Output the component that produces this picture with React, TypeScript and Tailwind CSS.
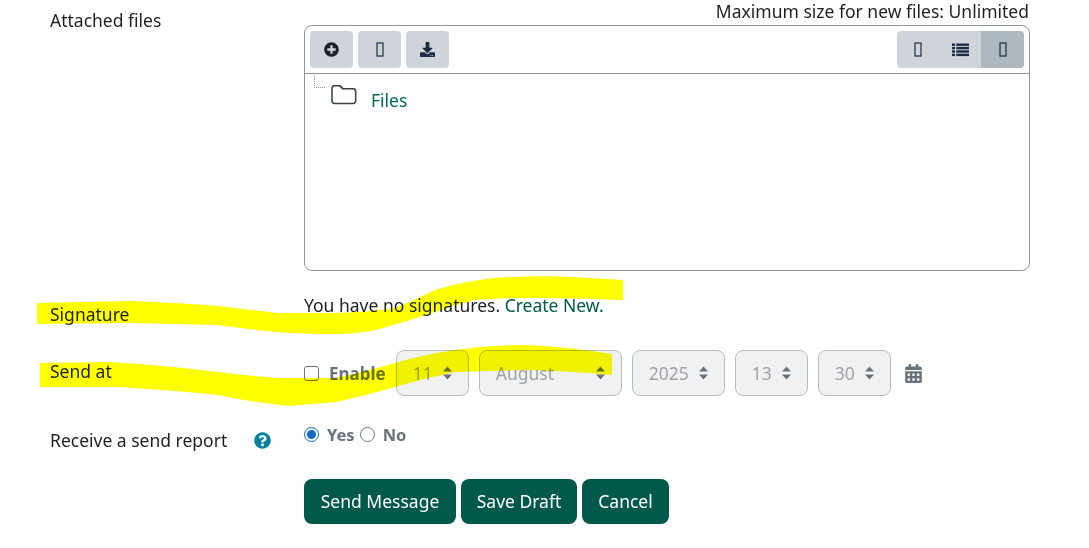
import React from 'react';
import { FaPlusCircle, FaDownload, FaCalendarAlt, FaQuestionCircle } from 'react-icons/fa';

const Tofu = () => (
  <svg width="8" height="15" viewBox="0 0 8 15" fill="none">
    <rect x="1" y="1" width="6" height="13" stroke="#1d2a44" strokeWidth="1.2" />
  </svg>
);

const ListIcon = () => (
  <svg width="17" height="14" viewBox="0 0 17 14" fill="#1d2a44">
    <rect x="0" y="0.5" width="3" height="2.4" />
    <rect x="4.2" y="0.5" width="12.8" height="2.4" />
    <rect x="0" y="3.9" width="3" height="2.4" />
    <rect x="4.2" y="3.9" width="12.8" height="2.4" />
    <rect x="0" y="7.3" width="3" height="2.4" />
    <rect x="4.2" y="7.3" width="12.8" height="2.4" />
    <rect x="0" y="10.7" width="3" height="2.4" />
    <rect x="4.2" y="10.7" width="12.8" height="2.4" />
  </svg>
);

const Caret = () => (
  <svg width="11" height="16" viewBox="0 0 11 16" fill="#6a737b">
    <path d="M5.5 1.5 10 6.5H1zM5.5 14.5 1 9.5h9z" />
  </svg>
);

const FakeSelect = ({ value, width }: { value: string; width: string }) => (
  <div className={`flex items-center justify-between h-[46px] pl-4 pr-[15px] bg-[#f0f1f3] border border-[#b8bcc1] rounded-[8px] text-[#9ea3a8] ${width}`}>
    <span>{value}</span>
    <Caret />
  </div>
);

const ToolButton = ({ children }: { children: React.ReactNode }) => (
  <div className="flex items-center justify-center w-[43px] h-[37px] bg-[#ced4da] rounded-[4px] text-[#1d2125]">
    {children}
  </div>
);

const GreenButton = ({ label, width }: { label: string; width: string }) => (
  <div className={`flex items-center justify-center h-[45px] bg-[#00594b] rounded-[8px] text-white ${width}`}>{label}</div>
);

export default function App() {
  return (
    <div
      className="relative w-[1089px] h-[548px] overflow-hidden bg-white text-[#1d2125] text-[17.5px] leading-[27px]"
      style={{ fontFamily: '"Noto Sans", "Open Sans", sans-serif' }}
    >
      {/* attached files */}
      <div className="flex">
        <div className="w-[304px] pl-[50px] pt-[7px]">Attached files</div>
        <div className="w-[726px]">
          <div className="h-[25px] leading-[23px] text-right pr-px">Maximum size for new files: Unlimited</div>
          <div className="h-[246px] border border-[#8f959e] rounded-[8px]">
            <div className="flex justify-between h-[48px] px-[5px] pt-[5px] border-b border-[#8f959e]">
              <div className="flex gap-[5px]">
                <ToolButton><FaPlusCircle size={15} /></ToolButton>
                <ToolButton><Tofu /></ToolButton>
                <ToolButton><FaDownload size={15} color="#1d2a44" /></ToolButton>
              </div>
              <div className="flex h-[37px] rounded-[4px] overflow-hidden bg-[#ced4da]">
                <div className="flex items-center justify-center w-[42px]"><Tofu /></div>
                <div className="flex items-center justify-center w-[42px]"><ListIcon /></div>
                <div className="flex items-center justify-center w-[43px] bg-[#aeb8c0]"><Tofu /></div>
              </div>
            </div>
            <div className="flex pl-[8px]">
              <svg width="14" height="14" viewBox="0 0 14 14" className="mt-px" fill="none" stroke="#8f959e" strokeDasharray="1 1">
                <path d="M1.5 0v12.5H13" />
              </svg>
              <svg width="26" height="22" viewBox="0 0 26 22" fill="none" className="ml-[4px] mt-[10px]" stroke="#3a3f44" strokeWidth="1.5">
                <path d="M1 4.5C1 2.5 2 1.8 3.5 1.8h5.5l3 3h10c1.7 0 2.7.9 2.7 2.5v9.5c0 1.7-1 2.6-2.7 2.6H3.5C2 19.4 1 18.5 1 16.8z" />
                <path d="M9 1.8l3 3.2" />
              </svg>
              <a className="ml-[14px] mt-[13px] text-[#00695c]">Files</a>
            </div>
          </div>
        </div>
      </div>

      {/* signature */}
      <div className="flex mt-[21px] h-[36px]">
        <div className="w-[304px] pl-[50px] pt-[9px]">Signature</div>
        <div>You have no signatures. <a className="text-[#00594b]">Create New</a><span className="text-[#00594b]">.</span></div>
      </div>

      {/* send at */}
      <div className="flex mt-[22px]">
        <div className="w-[304px] pl-[50px] pt-[8px]">Send at</div>
        <div className="flex items-center gap-[10px]">
          <div className="flex items-center gap-[10px]">
            <input type="checkbox" className="appearance-none w-[15px] h-[15px] bg-white border border-[#6a737b] rounded-[3px]" />
            <span className="font-bold text-[#6a737b] text-[17px]">Enable</span>
          </div>
          <FakeSelect value="11" width="w-[73px]" />
          <FakeSelect value="August" width="w-[143px]" />
          <FakeSelect value="2025" width="w-[93px]" />
          <FakeSelect value="13" width="w-[73px]" />
          <FakeSelect value="30" width="w-[73px]" />
          <FaCalendarAlt size={19} color="#6a737b" className="ml-[3px]" />
        </div>
      </div>

      {/* send report */}
      <div className="flex mt-[25px] h-[33px]">
        <div className="flex justify-between w-[304px] pl-[50px] pr-[33px] pt-[6px]">
          <span>Receive a send report</span>
          <FaQuestionCircle size={17} color="#00819c" className="mt-[5px]" />
        </div>
        <div className="flex items-center h-[27px] font-bold text-[#6a737b] text-[16.5px]">
          <input type="radio" name="report" defaultChecked className="w-[15px] h-[15px] m-0 accent-[#0f6cbf]" />
          <span className="ml-[8px]">Yes</span>
          <input type="radio" name="report" className="w-[15px] h-[15px] m-0 ml-[5px]" />
          <span className="ml-[8px]">No</span>
        </div>
      </div>

      {/* actions */}
      <div className="flex gap-[5px] mt-[25px] ml-[304px]">
        <GreenButton label="Send Message" width="w-[152px]" />
        <GreenButton label="Save Draft" width="w-[116px]" />
        <GreenButton label="Cancel" width="w-[87px]" />
      </div>

      {/* highlighter scribbles on top of the screenshot */}
      <svg className="absolute inset-0 mix-blend-multiply pointer-events-none" width="1089" height="548" fill="#ffff00">
        <path d="M37 303 L131 301 Q180 303 218 306 Q250 310 277 313 L336 313 Q370 312 395 308 Q415 300 435 290 Q465 281 494 278 Q540 275 573 277 L623 280 L623 300 Q575 298 534 298 Q500 298 475 300 Q455 305 435 312 Q405 322 376 330 Q355 334 336 334 Q305 334 277 332 Q245 329 218 325 L131 323 L37 324 Z" />
        <path d="M40 363 L111 362 Q170 366 218 372 Q250 376 277 378 L336 378 Q365 372 395 363 Q425 354 455 350 Q490 345 526 345 Q570 347 612 354 L612 375 Q570 371 526 370 L455 372 Q425 378 395 387 Q365 396 336 402 L289 406 Q250 402 218 395 Q170 390 119 387 L40 387 Z" />
      </svg>
    </div>
  );
}
